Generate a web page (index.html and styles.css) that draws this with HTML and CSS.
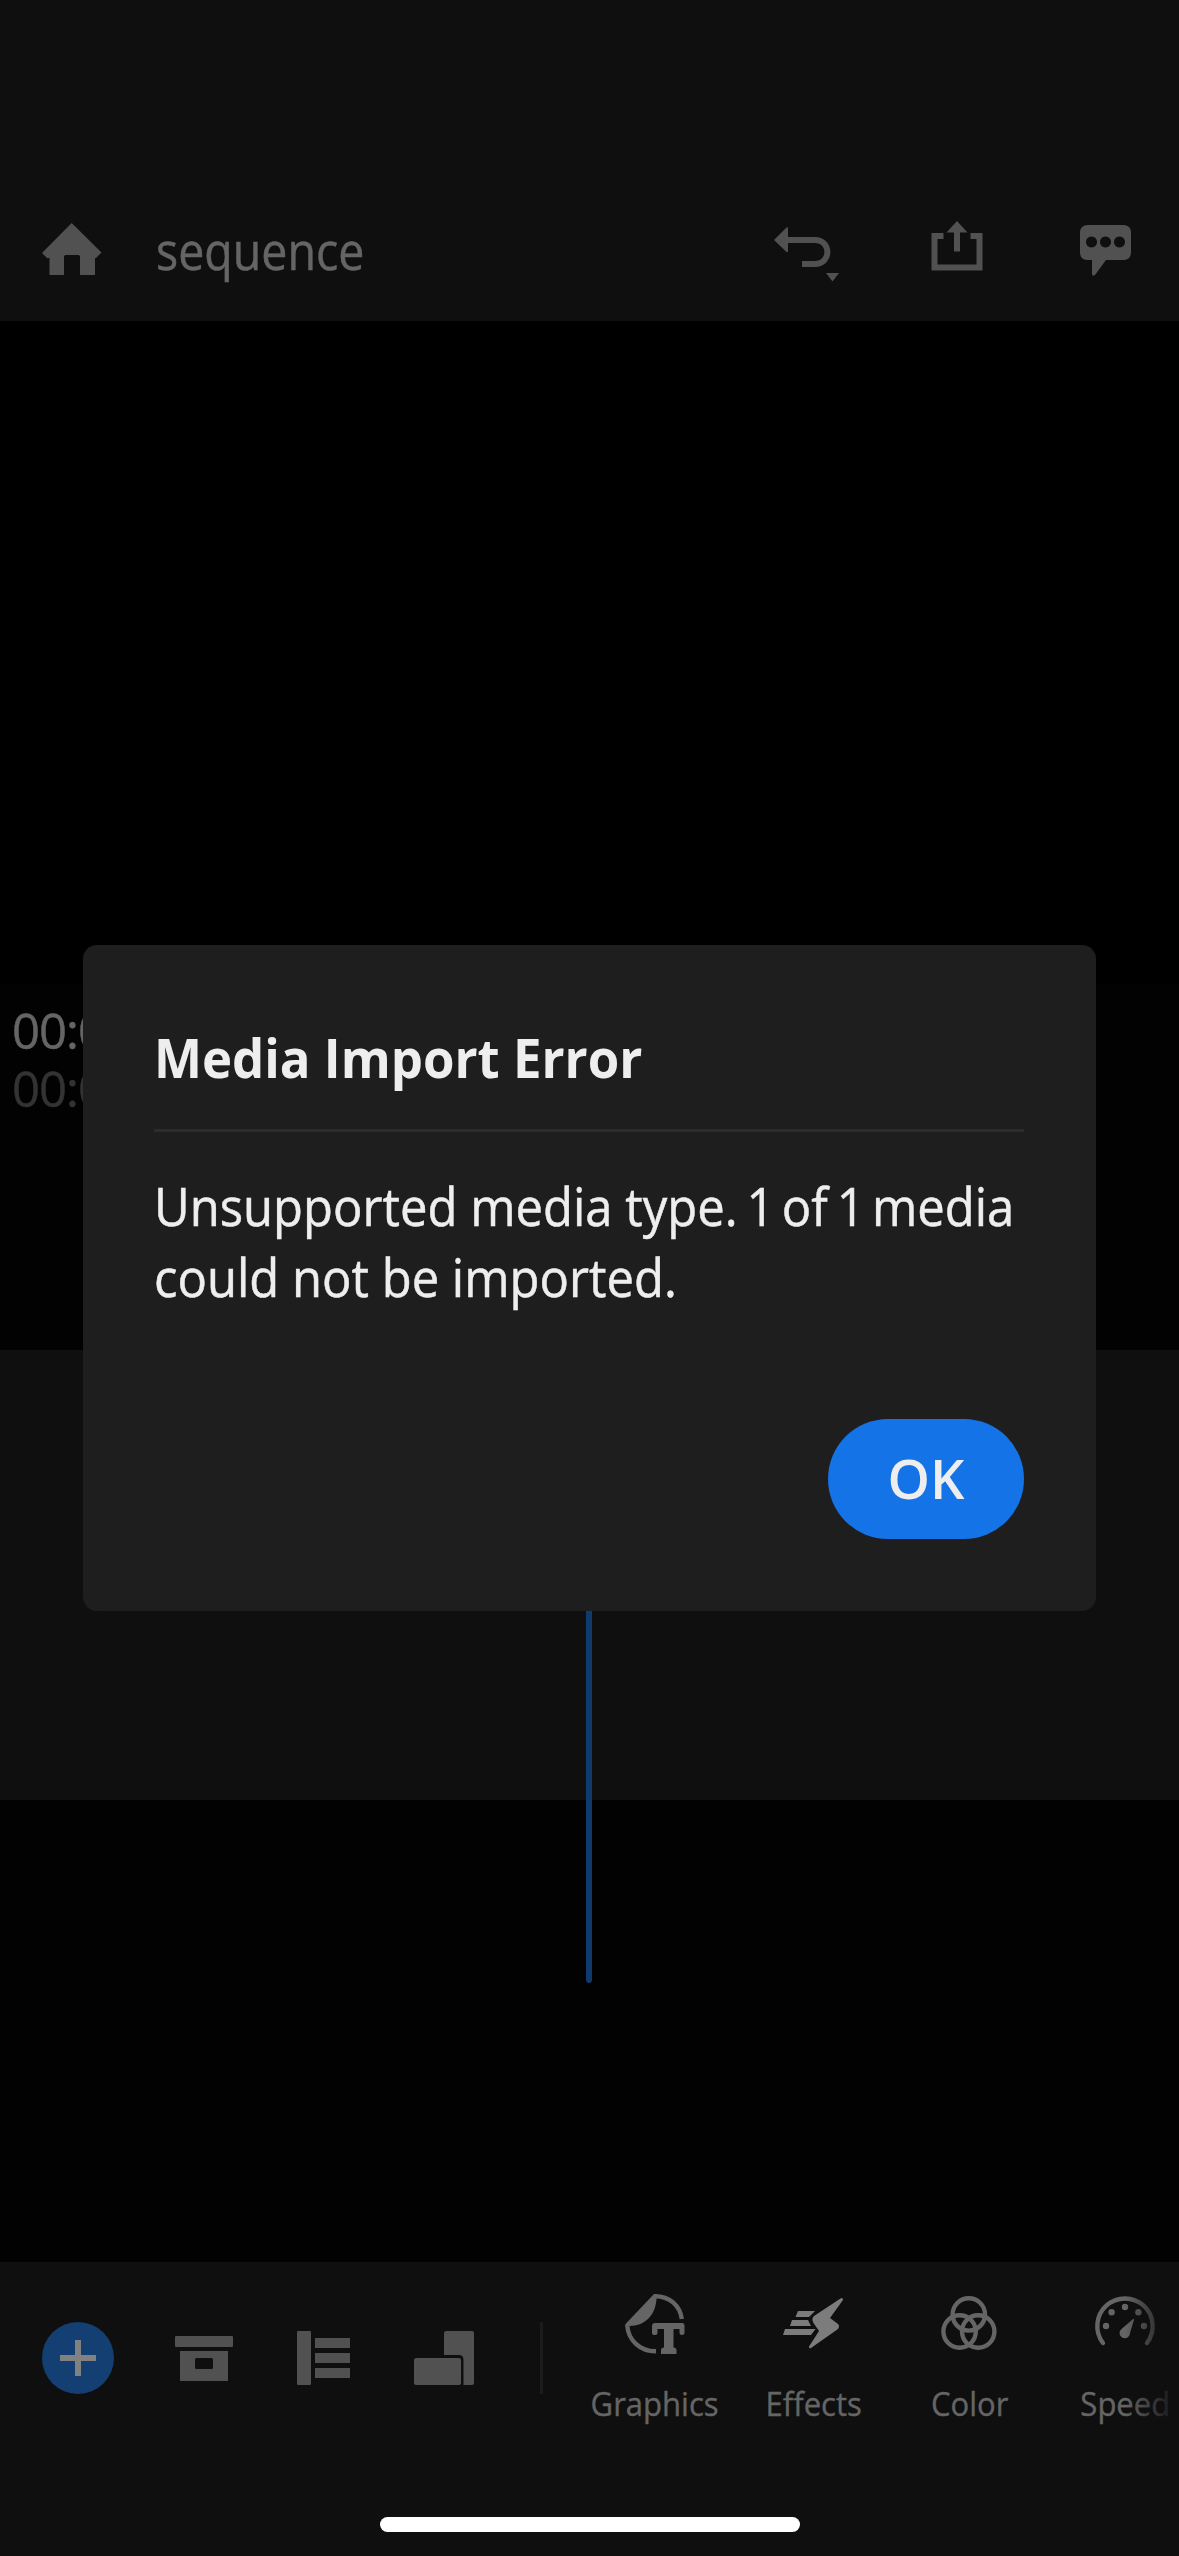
FILE: index.html
```html
<!DOCTYPE html>
<html lang="en">
<head>
<meta charset="utf-8">
<title>sequence</title>
<link rel="stylesheet" href="styles.css">
</head>
<body>
<div class="app">
  <header class="topbar">
    <svg class="home" width="60" height="52" viewBox="0 0 60 52"><path d="M29.700 0 59.500 29.500 54 35H53V52H38V34Q38 32 36 32H24Q22 32 22 34V52H7.500V35H5L0 30Z"/></svg>
    <span class="project-name">sequence</span>
    <div class="top-actions">
      <svg class="undo" width="66" height="55" viewBox="0 0 66 55"><path d="M0 13 12.500 .5Q14 -.5 14 1.500V24Q14 26 12.500 25Z"/><path class="line" d="M12 13H41C57.500 13 57.500 37 41 37H28"/><path d="M52 46H65L58.500 54.500Z"/></svg>
      <svg class="share" width="52" height="50" viewBox="0 0 52 50"><path d="M26 0 36.500 11.500H29V30.500H23V11.500H15.500Z"/><path class="line" d="M12.500 15H3.500V46.500H48.500V15H39.500"/></svg>
      <svg class="comment" width="51" height="51" viewBox="0 0 51 51"><path fill-rule="evenodd" d="M8 0H43Q51 0 51 8V27Q51 35 43 35H26L15 50Q12 52 12 49V35H8Q0 35 0 27V8Q0 0 8 0ZM11.500 11.500a5.500 5.500 0 1 0 .01 0ZM25.500 11.500a5.500 5.500 0 1 0 .01 0ZM39.500 11.500a5.500 5.500 0 1 0 .01 0Z"/></svg>
    </div>
  </header>
  <main class="preview"></main>
  <section class="timecodes">
    <span class="time">00:0</span>
    <span class="time total">00:0</span>
  </section>
  <section class="timeline">
    <div class="track"></div>
    <div class="playhead"></div>
  </section>
  <footer class="toolbar">
    <div class="actions">
      <svg width="72" height="72" viewBox="0 0 72 72"><circle class="add" cx="36" cy="36" r="36"/><path class="plus" d="M36 18V54M18 36H54"/></svg>
      <svg class="archive" width="58" height="46" viewBox="0 0 58 46"><rect width="58" height="11" rx="1"/><path fill-rule="evenodd" d="M5 15H53V45H5ZM21.500 22Q20 22 20 23.500V31.500Q20 33 21.500 33H36.500Q38 33 38 31.500V23.500Q38 22 36.500 22Z"/></svg>
      <svg class="tracks" width="53" height="54" viewBox="0 0 53 54"><rect width="14" height="54" rx="1"/><path d="M18 7H53V17H18ZM18 22H53V32H18ZM18 37H53V47H18Z"/></svg>
      <svg class="layout" width="60" height="54" viewBox="0 0 60 54"><rect y="27" width="47" height="27" rx="2"/><path d="M32 0H58Q60 0 60 2V52Q60 54 58 54H49.500V29Q49.500 24 45 24H30V2Q30 0 32 0Z"/></svg>
      <div class="divider"></div>
    </div>
    <nav class="tools">
      <div class="tool graphics">
        <svg width="60" height="60" viewBox="0 0 60 60"><path d="M29 0H31.500V4C31 20 21 32 4 32H.5V30Z"/><path class="thin" d="M30 2.200C45 2.200 55 12 56.800 25M2.200 31C3 46 15 57.500 31 57.300"/><path d="M30 29H57Q59.500 29 59.500 32V39Q59.500 41 57 41Q54.500 41 54.500 38.500V35H48.500V53.500Q51.500 53.500 51.500 56.500V60H36V56.500Q36 53.500 39 53.500V35H32.500V38.500Q32.500 41 30 41 27 41 27 39V32Q27 29 30 29Z"/></svg>
        <span class="tool-label">Graphics</span>
      </div>
      <div class="tool effects">
        <svg class="bright" width="60" height="60" viewBox="0 -4 60 60"><path d="M57.500 .5Q60 -1 60 2L47 20 55 26Q57 28 55 31L28 50Q25.500 51 26 48.500L36 33 30.500 25Q28 21 31 18ZM15 13H32L26 19H12.500ZM9 22H25L28 28H7ZM2 31H32.500L28 37H0Z"/></svg>
        <span class="tool-label">Effects</span>
      </div>
      <div class="tool color">
        <svg width="56" height="60" viewBox="0 -2 56 60"><g class="thin"><circle cx="27.800" cy="18.400" r="16.200"/><circle cx="18.600" cy="35.500" r="16.200"/><circle cx="37.200" cy="35.500" r="16.200"/></g></svg>
        <span class="tool-label">Color</span>
      </div>
      <div class="tool speed">
        <svg width="60" height="60" viewBox="0 -2 60 60"><path class="thin round" d="M8 47A27.700 27.700 0 1 1 52 47"/><circle cx="11" cy="30" r="3.200"/><circle cx="16.600" cy="16.300" r="3.200"/><circle cx="30" cy="11" r="3.200"/><circle cx="43.400" cy="16.300" r="3.200"/><circle cx="49" cy="30" r="3.200"/><path d="M37.500 23.500Q39 22 39 24L35 37A5.200 5.200 0 1 1 26.500 33Z"/></svg>
        <span class="tool-label">Speed</span>
      </div>
      <div class="fade"></div>
    </nav>
    <div class="home-indicator"></div>
  </footer>
</div>
<div class="dialog" role="alertdialog">
  <h1 class="dialog-title"><span class="title-text">Media Import Error</span></h1>
  <p class="dialog-text">Unsupported media type. <span class="one">1</span> of <span class="one">1</span> media<br>could not be imported.</p>
  <button class="ok">OK</button>
</div>
</body>
</html>
```
FILE: styles.css
```css
* { box-sizing: border-box; }
body { margin: 0; background: #000; font-family: "Open Sans", "Noto Sans", sans-serif; }
svg { display: block; flex: none; overflow: visible; }
.app { width: 1179px; height: 2556px; display: flex; flex-direction: column; color: #656565; }

.topbar { height: 321px; padding: 223px 48px 0 42px; display: flex; align-items: flex-start; background: #0f0f0f; fill: #515151; }
.line { fill: none; stroke: #515151; stroke-width: 6; }
.project-name { font-size: 51px; line-height: 60px; margin: -3px 0 0 54px; transform: scaleX(.912); transform-origin: 0 0; -webkit-text-stroke: .5px; }
.top-actions { margin-left: auto; display: flex; align-items: flex-start; }
.undo { margin: 4px 91px 0 0; }
.share { margin: -2px 97px 0 0; }
.comment { margin-top: 2px; }

.preview { height: 663px; }
.timecodes { height: 366px; background: #020202; padding: 17px 12px; display: flex; flex-direction: column; font-size: 49px; line-height: 58px; letter-spacing: -1px; }
.time { -webkit-text-stroke: .5px; }
.total { color: #333; }

.timeline { height: 912px; background: #020202; position: relative; }
.track { height: 450px; background: #0f0f0f; }
.playhead { position: absolute; left: 586px; top: 0; width: 6px; height: 633px; background: #0e3a6e; border-radius: 0 0 3px 3px; }

.toolbar { height: 294px; background: #0f0f0f; display: grid; grid-template-columns: 583px 596px; grid-template-rows: 255px auto; }
.actions { display: flex; align-items: flex-start; padding: 60px 0 0 42px; fill: #515151; }
.add { fill: #133f72; }
.plus { stroke: #818181; stroke-width: 6; }
.archive { margin: 14px 0 0 61px; }
.tracks { margin: 9px 0 0 64px; }
.layout { margin: 9px 0 0 64px; }
.divider { width: 3px; height: 72px; margin-left: 66px; background: #1c1c1c; }

.tools { position: relative; display: grid; grid-template-columns: 128px repeat(3, 108px); column-gap: 48px; padding-top: 32px; justify-content: start; align-items: start; fill: #656565; }
.tool { display: flex; flex-direction: column; align-items: center; gap: 30px; }
.graphics { margin-right: -15px; }
.thin { fill: none; stroke: #656565; stroke-width: 4.4; }
.round { stroke-linecap: round; }
.bright { fill: #7c7c7c; }
.tool-label { font-size: 33px; line-height: 40px; transform: translateX(.5px) scaleX(.94); -webkit-text-stroke: .4px; }
.fade { position: absolute; right: 0; top: 0; width: 54px; height: 255px; background: linear-gradient(90deg, rgba(15,15,15,0), #0f0f0f); }
.home-indicator { grid-column: 1 / 3; justify-self: center; width: 420px; height: 15px; border-radius: 8px; background: #fff; }

.dialog { position: absolute; left: 83px; top: 945px; width: 1013px; height: 666px; padding: 76px 72px 72px 71px; display: flex; flex-direction: column; background: #1e1e1e; border-radius: 14px; color: #eee; }
.dialog-title { margin: 0; padding: 0 0 36px; border-bottom: 3px solid #2c2c2c; font-size: 54px; line-height: 72px; font-weight: 700; }
.title-text { display: inline-block; transform: scaleX(.943); transform-origin: 0 0; }
.dialog-text { margin: 38px 0 0; font-size: 53px; line-height: 71px; white-space: nowrap; transform: scaleX(.924); transform-origin: 0 0; -webkit-text-stroke: .5px; }
.one { margin: 0 -6px 0 -4px; }
.ok { margin: auto 0 0 auto; padding: 0 0 2px; width: 196px; height: 120px; border: 0; border-radius: 60px; background: #1473e6; color: #eee; font-family: inherit; font-size: 54px; font-weight: 600; }
```
